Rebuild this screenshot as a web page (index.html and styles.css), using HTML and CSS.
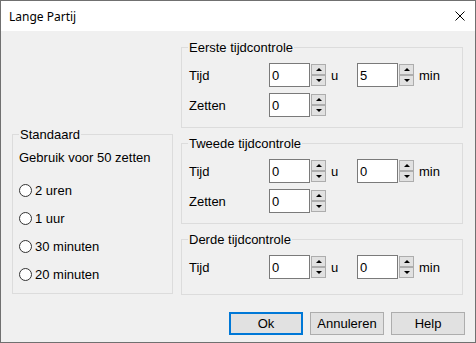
FILE: index.html
```html
<!DOCTYPE html>
<html lang="nl">
<head>
  <meta charset="UTF-8" />
  <title>Lange Partij</title>
  <link rel="stylesheet" href="styles.css">
</head>
<body>

  <div class="window">
    <div class="titlebar">
      <span class="title">Lange Partij</span>
      <svg class="close" width="10" height="10" viewBox="0 0 10 10">
        <path d="M0.5 0.5 L9.5 9.5 M9.5 0.5 L0.5 9.5" stroke="#000" stroke-width="1" fill="none"/>
      </svg>
    </div>

    <div class="content">
      <div class="columns">

        <fieldset class="group standard">
          <legend>Standaard</legend>
          <div class="hint">Gebruik voor 50 zetten</div>
          <label class="radio-row"><input type="radio" name="preset" class="radio"> 2 uren</label>
          <label class="radio-row"><input type="radio" name="preset" class="radio"> 1 uur</label>
          <label class="radio-row"><input type="radio" name="preset" class="radio"> 30 minuten</label>
          <label class="radio-row"><input type="radio" name="preset" class="radio"> 20 minuten</label>
        </fieldset>

        <div class="right">
          <fieldset class="group">
            <legend>Eerste tijdcontrole</legend>
            <div class="row">
              <span class="label">Tijd</span>
              <input class="num" type="text" value="0">
              <span class="spin"><span class="spin-btn up"></span><span class="spin-btn down"></span></span>
              <span class="unit">u</span>
              <input class="num" type="text" value="5">
              <span class="spin"><span class="spin-btn up"></span><span class="spin-btn down"></span></span>
              <span class="unit">min</span>
            </div>
            <div class="row">
              <span class="label">Zetten</span>
              <input class="num" type="text" value="0">
              <span class="spin"><span class="spin-btn up"></span><span class="spin-btn down"></span></span>
            </div>
          </fieldset>

          <fieldset class="group">
            <legend>Tweede tijdcontrole</legend>
            <div class="row">
              <span class="label">Tijd</span>
              <input class="num" type="text" value="0">
              <span class="spin"><span class="spin-btn up"></span><span class="spin-btn down"></span></span>
              <span class="unit">u</span>
              <input class="num" type="text" value="0">
              <span class="spin"><span class="spin-btn up"></span><span class="spin-btn down"></span></span>
              <span class="unit">min</span>
            </div>
            <div class="row">
              <span class="label">Zetten</span>
              <input class="num" type="text" value="0">
              <span class="spin"><span class="spin-btn up"></span><span class="spin-btn down"></span></span>
            </div>
          </fieldset>

          <fieldset class="group last">
            <legend>Derde tijdcontrole</legend>
            <div class="row">
              <span class="label">Tijd</span>
              <input class="num" type="text" value="0">
              <span class="spin"><span class="spin-btn up"></span><span class="spin-btn down"></span></span>
              <span class="unit">u</span>
              <input class="num" type="text" value="0">
              <span class="spin"><span class="spin-btn up"></span><span class="spin-btn down"></span></span>
              <span class="unit">min</span>
            </div>
          </fieldset>
        </div>
      </div>

      <div class="buttons">
        <button class="btn default">Ok</button>
        <button class="btn">Annuleren</button>
        <button class="btn">Help</button>
      </div>
    </div>
  </div>

</body>
</html>
```

FILE: styles.css
```css
:root {
  --face: #f0f0f0;
  --frame: #dcdcdc;
  --btn: #e1e1e1;
  --btn-border: #adadad;
  --accent: #0078d7;
}
* {
  box-sizing: border-box;
}
body {
  margin: 0;
  font-family: 'Liberation Sans', Arial, sans-serif;
  font-size: 13px;
  color: #000;
  background: var(--face);
}
.window {
  width: 476px;
  height: 343px;
  border: 1px solid #707070;
  background: var(--face);
}
.titlebar {
  height: 30px;
  background: #fff;
  display: flex;
  align-items: center;
  justify-content: space-between;
  padding: 0 10px 0 8px;
}
.title {
  font-family: 'Noto Sans', sans-serif;
  font-size: 12px;
}
.content {
  padding: 9px 10px 0 11px;
}
.columns {
  display: flex;
  gap: 8px;
  margin-right: 2px;
}
.right {
  width: 282px;
  display: flex;
  flex-direction: column;
  gap: 8px;
}
.group {
  margin: 0;
  min-width: 0;
  border: 1px solid var(--frame);
  padding: 8px 6px 10px 6px;
}
.group legend {
  padding: 0 1px;
  line-height: 15px;
}
.group.last {
  padding-bottom: 15px;
}
.standard {
  width: 161px;
  margin-top: 87px;
  height: 167px;
  padding-bottom: 5px;
}
.hint {
  line-height: 15px;
  margin-bottom: 11px;
}
.radio-row {
  display: flex;
  align-items: center;
  height: 28px;
}
.radio {
  appearance: none;
  width: 13px;
  height: 13px;
  margin: 0 3px 0 0;
  border: 1px solid #333;
  border-radius: 50%;
  background: #fff;
}
.row {
  display: flex;
  align-items: center;
  height: 24px;
}
.row + .row {
  margin-top: 6px;
}
.label {
  width: 81px;
  padding-left: 1px;
}
.num {
  width: 41px;
  height: 24px;
  margin: 0;
  padding: 0 2px;
  border: 1px solid #7a7a7a;
  background: #fff;
  font: inherit;
  color: #000;
}
.spin {
  display: flex;
  flex-direction: column;
  width: 15px;
  height: 22px;
  margin-left: 1px;
}
.spin-btn {
  flex: 1;
  border: 1px solid var(--btn-border);
  background: var(--btn);
  display: flex;
  align-items: center;
  justify-content: center;
}
.spin-btn::after {
  content: "";
  border-left: 3px solid transparent;
  border-right: 3px solid transparent;
}
.spin-btn.up::after {
  border-bottom: 3px solid #000;
}
.spin-btn.down::after {
  border-top: 3px solid #000;
}
.unit {
  width: 31px;
  padding-left: 5px;
}
.unit:last-child {
  width: auto;
}
.buttons {
  display: flex;
  justify-content: flex-end;
  gap: 7px;
  margin-top: 17px;
}
.btn {
  width: 74px;
  height: 23px;
  padding: 0;
  border: 1px solid var(--btn-border);
  background: var(--btn);
  font: inherit;
  color: #000;
}
.btn.default {
  border: 2px solid var(--accent);
}
```
